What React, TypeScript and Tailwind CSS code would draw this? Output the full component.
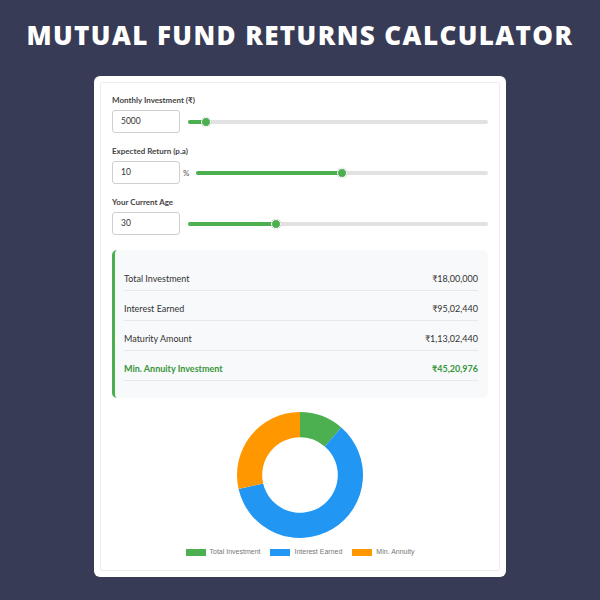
import React from "react";

const GREEN = "#4caf50";
const BLUE = "#2196f3";
const ORANGE = "#ff9800";

function Slider({ pct, className }: { pct: number; className: string }) {
  return (
    <div className={"relative h-[4px] rounded-full bg-[#e2e2e2] " + className}>
      <div className="absolute left-0 top-0 h-[4px] rounded-full bg-[#4caf50]" style={{ width: pct + "%" }} />
      <div
        className="absolute top-1/2 w-[10px] h-[10px] -translate-x-1/2 -translate-y-1/2 rounded-full bg-[#4caf50] border-[1.5px] border-white shadow-[0_0_1px_rgba(0,0,0,0.3)]"
        style={{ left: pct + "%" }}
      />
    </div>
  );
}

function Field({ label, value, pct, suffix }: { label: string; value: string; pct: number; suffix?: string }) {
  return (
    <div className="flex flex-col">
      <div className="text-[8px] leading-[10px] font-bold text-[#444] mb-[5px]">{label}</div>
      <div className="flex items-center h-[23px]">
        <div className="w-[68px] h-[23px] border border-[#cfcfcf] rounded-[3px] flex items-center pl-[8px] text-[8.5px] text-[#333] bg-white">
          {value}
        </div>
        {suffix ? (
          <>
            <span className="ml-[3px] text-[8px] text-[#555]">{suffix}</span>
            <Slider pct={pct} className="ml-[7px] flex-1" />
          </>
        ) : (
          <Slider pct={pct} className="ml-[8px] flex-1" />
        )}
      </div>
    </div>
  );
}

function arcPath(cx: number, cy: number, r1: number, r2: number, a0: number, a1: number) {
  const rad = (a: number) => ((a - 90) * Math.PI) / 180;
  const p = (r: number, a: number) => [cx + r * Math.cos(rad(a)), cy + r * Math.sin(rad(a))];
  const large = a1 - a0 > 180 ? 1 : 0;
  const [x0, y0] = p(r2, a0);
  const [x1, y1] = p(r2, a1);
  const [x2, y2] = p(r1, a1);
  const [x3, y3] = p(r1, a0);
  return `M${x0} ${y0} A${r2} ${r2} 0 ${large} 1 ${x1} ${y1} L${x2} ${y2} A${r1} ${r1} 0 ${large} 0 ${x3} ${y3} Z`;
}

function Donut() {
  const vals = [1800000, 9502440, 4520976];
  const cols = [GREEN, BLUE, ORANGE];
  const total = vals.reduce((a, b) => a + b, 0);
  let a = 0;
  const segs = vals.map((v, i) => {
    const a0 = a;
    const a1 = a + (v / total) * 360;
    a = a1;
    return <path key={i} d={arcPath(63, 63, 37.8, 63, a0, a1)} fill={cols[i]} />;
  });
  return (
    <svg width="126" height="126" viewBox="0 0 126 126">
      {segs}
    </svg>
  );
}

function Row({ label, value, bold }: { label: string; value: string; bold?: boolean }) {
  return (
    <div
      className={
        "flex justify-between items-center pt-[12px] pb-[5px] leading-[12px] border-b border-[#e6e8eb] " +
        (bold ? "text-[9px] font-bold text-[#37963b]" : "text-[9px] text-[#333]")
      }
    >
      <span>{label}</span>
      <span>{value}</span>
    </div>
  );
}

function LegendItem({ color, label }: { color: string; label: string }) {
  return (
    <div className="flex items-center gap-[4px]">
      <div className="w-[20px] h-[7px]" style={{ backgroundColor: color }} />
      <span className="text-[7px] leading-[10px] text-[#777]" style={{ fontFamily: '"Liberation Sans", Arial, sans-serif' }}>
        {label}
      </span>
    </div>
  );
}

export default function App() {
  return (
    <div
      className="w-[600px] h-[600px] bg-[#373b55] flex flex-col items-center"
      style={{ fontFamily: 'Lato, "DejaVu Sans", sans-serif' }}
    >
      <h1
        className="mt-[22px] text-[26px] leading-[26px] font-extrabold text-white tracking-[0.054em]"
        style={{ fontFamily: '"Open Sans", sans-serif' }}
      >
        MUTUAL FUND RETURNS CALCULATOR
      </h1>
      <div className="mt-[28px] w-[412px] h-[501px] bg-white rounded-[6px] p-[6px]">
        <div className="h-full border border-[#ececec] rounded-[2px] px-[11px] pt-[12px] flex flex-col">
          <div className="flex flex-col gap-[13px]">
            <Field label="Monthly Investment (₹)" value="5000" pct={6} />
            <Field label="Expected Return (p.a)" value="10" pct={50} suffix="%" />
            <Field label="Your Current Age" value="30" pct={29.3} />
          </div>
          <div className="mt-[15px] bg-[#f8f9fa] border-l-[3px] border-[#4caf50] rounded-[5px] pl-[9px] pr-[10px] pt-[11px] pb-[17px]">
            <Row label="Total Investment" value="₹18,00,000" />
            <Row label="Interest Earned" value="₹95,02,440" />
            <Row label="Maturity Amount" value="₹1,13,02,440" />
            <Row label="Min. Annuity Investment" value="₹45,20,976" bold />
          </div>
          <div className="mt-[14px] flex justify-center">
            <Donut />
          </div>
          <div className="mt-[9px] flex justify-center gap-[10px]">
            <LegendItem color={GREEN} label="Total Investment" />
            <LegendItem color={BLUE} label="Interest Earned" />
            <LegendItem color={ORANGE} label="Min. Annuity" />
          </div>
        </div>
      </div>
    </div>
  );
}
